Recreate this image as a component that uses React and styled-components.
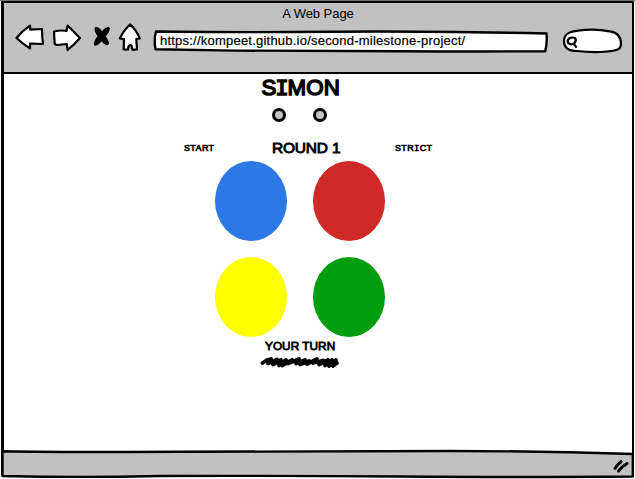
import React from 'react';
import styled, { createGlobalStyle } from 'styled-components';

const GlobalStyle = createGlobalStyle`
  * { box-sizing: border-box; }
  body { margin: 0; background: #fff; overflow: hidden; }
`;

const BrowserWindow = styled.div`
  width: 635px;
  height: 479px;
  padding: 1px 1px 0;
  display: grid;
  grid-template-rows: 73px 376px 29px;
  font-family: 'Liberation Sans', Arial, sans-serif;
  color: #000;
  background: linear-gradient(#777b77 0 1px, #fff 1px 478px);
`;

const Header = styled.header`
  display: grid;
  grid-template-rows: 21px 1fr;
  background: #c1c1c1;
  border: solid #000;
  border-width: 2px 2px 2px 3px;
`;

const WindowTitle = styled.div`
  padding-top: 3px;
  text-align: center;
  font-size: 13px;
  line-height: 16px;
  letter-spacing: -.05px;
`;

const Toolbar = styled.nav`
  display: flex;
  align-items: flex-start;
  padding-left: 11px;
`;

const Drawing = styled.svg`
  display: block;
  flex: none;
  overflow: visible;
  fill: ${({ $fill }) => $fill || '#fff'};
  stroke: #000;
  stroke-width: ${({ $stroke }) => $stroke || 2.2}px;
  stroke-linecap: round;
  stroke-linejoin: round;
`;

const GripStroke = styled.path`
  fill: none;
  stroke-width: 3px;
`;

const NavigationIcons = styled.div`
  display: flex;
  width: 138px;
`;

const Field = styled.div`
  display: grid;
  width: ${({ $width }) => $width}px;
  height: 24px;
  margin-top: 5px;
  > * { grid-area: 1 / 1; }
`;

const Address = styled.span`
  z-index: 1;
  padding-left: 7px;
  margin-top: 4px;
  font-size: 13px;
  line-height: 16px;
  letter-spacing: .22px;
  white-space: nowrap;
  -webkit-text-stroke: .2px #000;
`;

const Page = styled.main`
  display: flex;
  flex-direction: column;
  background: #fff;
  border: solid #000;
  border-width: 0 2px 0 3px;
`;

const Title = styled.h1`
  margin: 1px 0 0 257.5px;
  height: 26px;
  font-size: 22.3px;
  font-weight: normal;
  line-height: 26px;
  letter-spacing: .2px;
  -webkit-text-stroke: 1.5px #000;
  white-space: nowrap;
`;

const BarredI = styled.span`
  font-family: 'Liberation Mono', monospace;
  margin: 0 ${({ $inset }) => $inset}px;
  line-height: 0;
`;

const Indicators = styled.div`
  display: flex;
  gap: 27px;
  margin: 7px 0 0 268px;
`;

const Indicator = styled.span`
  width: 14px;
  height: 14px;
  border: 3px solid #000;
  border-radius: 50%;
  background: #c4c4c4;
`;

const Controls = styled.div`
  display: grid;
  grid-template-columns: 88px 123px 60px;
  align-items: center;
  height: 22px;
  margin: 15px 0 0 180px;
`;

const Control = styled.button`
  padding: 0;
  border: 0;
  background: none;
  color: #000;
  text-align: left;
  font: 9px/12px 'Liberation Sans', Arial, sans-serif;
  letter-spacing: ${({ $spacing }) => $spacing}px;
  -webkit-text-stroke: .6px #000;
`;

const Round = styled.span`
  font-size: 15.5px;
  line-height: 20px;
  letter-spacing: -.2px;
  -webkit-text-stroke: .9px #000;
`;

const Pads = styled.div`
  display: grid;
  grid-template-columns: 72px 72px;
  grid-template-rows: 80px 80px;
  gap: 16px 26px;
  margin: 2px 0 0 211px;
`;

const Pad = styled.button`
  padding: 0;
  border: 0;
  border-radius: 50%;
  background: ${({ $color }) => $color};
`;

const Turn = styled.div`
  margin: 1px 0 2px 261px;
  font-size: 11.8px;
  line-height: 16px;
  letter-spacing: .03px;
  -webkit-text-stroke: .8px #000;
`;

const ScribbleRow = styled.div`
  padding-left: 256px;
`;

const Footer = styled.footer`
  display: grid;
  background: linear-gradient(90deg, #000 3px, transparent 3px 631px, #000 631px) 0 0 / 100% 25px no-repeat;
`;

export default function App() {
  return (
    <>
      <GlobalStyle />
      <BrowserWindow>
        <Header>
          <WindowTitle>A Web Page</WindowTitle>
          <Toolbar>
            <NavigationIcons>
              <Drawing width="37" height="28" viewBox="15 23 37 28">
                <path d="M16.5 37Q22 30 30 24.6L30.3 28.7L42 28Q42 36 43 43L30 42.5L30 47.5Q23 43 16.5 37Z" />
              </Drawing>
              <Drawing width="40" height="28" viewBox="52 23 40 28">
                <path d="M54 30.5Q60 29 66.6 29.8L67.6 24.5L80 37Q74 44 67.6 49L66.8 43L57 44Q54.5 44 54.5 40.5Z" />
              </Drawing>
              <Drawing width="26" height="28" viewBox="92 23 26 28" $fill="#000" $stroke={3}>
                <path d="M96 27.5Q99 27 102 33.5Q104.5 28 108.3 27.5Q108 31 103.7 35.2Q108 40.5 107.3 42.8Q104 42 101.5 37.5Q98.5 42.5 95.3 43.3Q95.5 39.5 99.5 35.2Q96 31 96 27.5Z" />
              </Drawing>
              <Drawing width="34" height="28" viewBox="118 23 34 28">
                <path d="M130 23.5Q136 28 139.8 37.5L136.3 38L137 48.3L132.5 48.8L131.5 44.5L130 44L128.5 45.5L128 48.7L123.7 48.5L124 38.2L119.8 37.5Q124 29 130 23.5Z" />
              </Drawing>
            </NavigationIcons>
            <Field $width={409}>
              <Drawing width="396" height="24" viewBox="153 29 396 24" $stroke={2.4}>
                <path d="M156 31.5Q250 32.7 330 31.7T546.5 33.5Q547.5 42 545.2 51.3Q470 51.6 400 51.2T235 50.6L155.5 49.3Q153.7 39 156 31.5Z" />
              </Drawing>
              <Address>https://kompeet.github.io/second-milestone-project/</Address>
            </Field>
            <Field $width={62}>
              <Drawing width="60" height="24" viewBox="562 29 60 24">
                <path d="M564 41C564 33 571 31.3 578 30.6Q594 28.3 610 31.3C618 32.5 621 37 621 44C621 50 615 51 607 51.5Q593 52.8 577 51C569 51 564 48 564 41Z" />
                <path d="M574.8 38.2C572.5 36.7 567.8 37.8 567.7 41.1C567.7 44.6 572 45.2 574.6 43C576 41.2 576.3 39.4 574.8 38.2M573.5 43.5L576 46.8" />
              </Drawing>
            </Field>
          </Toolbar>
        </Header>
        <Page>
          <Title>S<BarredI $inset={-1.4}>I</BarredI>MON</Title>
          <Indicators><Indicator /><Indicator /></Indicators>
          <Controls>
            <Control $spacing={0.35}>START</Control>
            <Round>ROUND 1</Round>
            <Control $spacing={0.35}>STR<BarredI $inset={-0.1}>I</BarredI>CT</Control>
          </Controls>
          <Pads>
            <Pad $color="#2c78e4" aria-label="Blue" />
            <Pad $color="#cf2a27" aria-label="Red" />
            <Pad $color="#ffff00" aria-label="Yellow" />
            <Pad $color="#009e0f" aria-label="Green" />
          </Pads>
          <Turn>YOUR TURN</Turn>
          <ScribbleRow>
            <Drawing width="80" height="12" viewBox="260 356 80 12" $fill="none" $stroke={3.8}>
              <path d="M262.5 363L267 360L271 359L268 363.5L277 359.5L273 364.5L281 360L279 365.5L286 360L282 365.5L292 360L288 363.5L299 359L296 363.5L305 360L300 364.5L309 361L307 364L317 359L313 363L323 360.5L319 364.5L328 360L325 365.5L332 360L329 366L336 360L333 366L337 363" />
            </Drawing>
          </ScribbleRow>
        </Page>
        <Footer>
          <Drawing width="633" height="29" viewBox="1 450 633 29" $fill="#c1c1c1" $stroke={2.4}>
            <path d="M2.5 451.2Q60 452.3 180 451.8T450 451Q540 451 632.8 454V476.5Q530 477.4 400 476.5T160 476Q80 477.7 2.5 476Z" />
            <GripStroke d="M615 468.3Q618 464.3 621 461.7M618.5 471Q622 466.5 627 463.5" />
          </Drawing>
        </Footer>
      </BrowserWindow>
    </>
  );
}
